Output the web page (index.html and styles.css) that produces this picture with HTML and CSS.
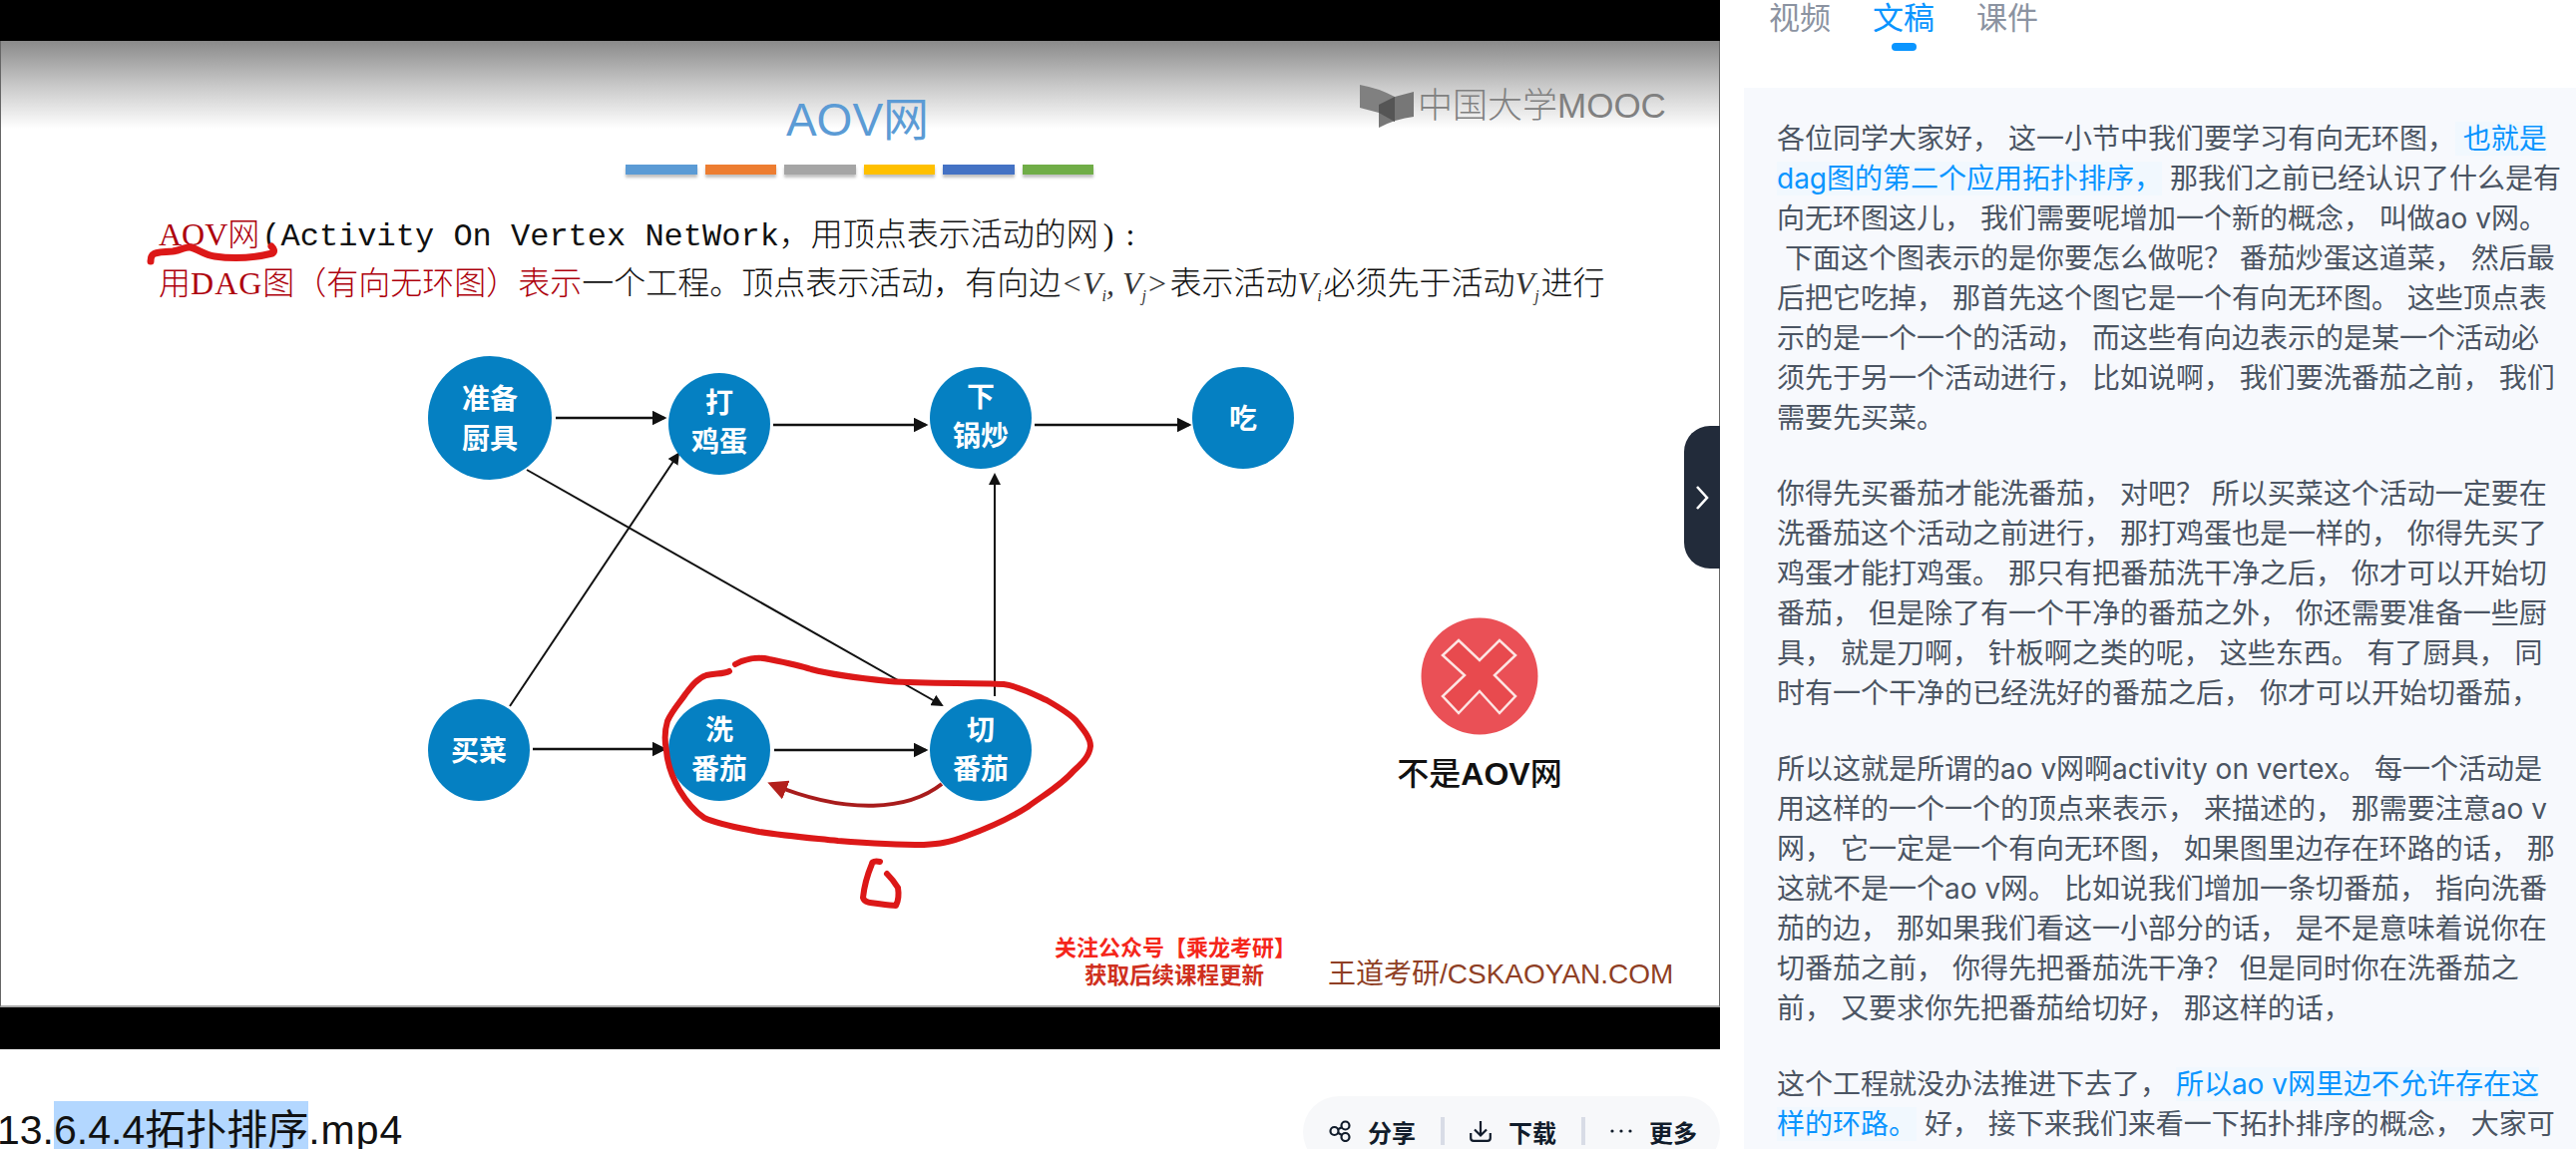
FILE: index.html
```html
<!DOCTYPE html>
<html lang="zh-CN">
<head>
    <meta charset="UTF-8">
    <title>13.6.4.4拓扑排序.mp4</title>
    <link rel="stylesheet" href="styles.css">
</head>
<body>
    <div id="page">
        <div id="left-column">
            <div id="player">
                <div id="slide">
                    <svg class="logo-mark" viewBox="0 0 58 44">
                        <path d="M2 1 Q20 4 37 13 L37 38 L21 29 L2 24 Z" fill="#808080"/>
                        <path d="M21 21 L37 13 L56 8 L56 33 Q38 35 21 44 Z" fill="#777"/>
                        <path d="M21 21 L37 13 L37 38 L21 29 Z" fill="#555"/>
                    </svg>
                    <div class="logo-text">中国大学MOOC</div>

                    <h2 class="slide-title">AOV网</h2>
                    <div class="title-bars">
                        <span class="bar bar-blue"></span>
                        <span class="bar bar-orange"></span>
                        <span class="bar bar-grey"></span>
                        <span class="bar bar-yellow"></span>
                        <span class="bar bar-navy"></span>
                        <span class="bar bar-green"></span>
                    </div>

                    <div class="slide-line"><span class="red">AOV网</span><span class="mono">(Activity On Vertex NetWork，</span>用顶点表示活动的网<span class="tail">) :</span></div>
                    <div class="slide-line"><span class="red">用<span class="dag">DAG</span>图（有向无环图）表示</span>一个工程。顶点表示活动，有向边<span class="math">&lt;V<sub>i</sub>, V<sub>j</sub>&gt;</span>表示活动<span class="math">V<sub>i</sub></span>必须先于活动<span class="math">V<sub>j</sub></span>进行</div>

                    <svg id="diagram" viewBox="0 41 1724 969">
                        <defs>
                            <marker id="tip" markerWidth="6" markerHeight="6" refX="5" refY="3" orient="auto">
                                <path d="M0 0 L6 3 L0 6 Z" fill="#111"/>
                            </marker>
                            <marker id="tip-red" markerWidth="5" markerHeight="5" refX="4" refY="2.5" orient="auto">
                                <path d="M0 0 L5 2.5 L0 5 Z" fill="#b3201c"/>
                            </marker>
                        </defs>

                        <g class="edge heavy">
                            <line x1="556" y1="419" x2="665" y2="419" marker-end="url(#tip)"/>
                            <line x1="774" y1="426" x2="927" y2="426" marker-end="url(#tip)"/>
                            <line x1="1036" y1="426" x2="1191" y2="426" marker-end="url(#tip)"/>
                            <line x1="533" y1="751" x2="665" y2="751" marker-end="url(#tip)"/>
                            <line x1="775" y1="752" x2="927" y2="752" marker-end="url(#tip)"/>
                        </g>
                        <g class="edge">
                            <line x1="996" y1="698" x2="996" y2="476" marker-end="url(#tip)"/>
                            <line x1="510" y1="708" x2="679" y2="455" marker-end="url(#tip)"/>
                            <line x1="527" y1="471" x2="943" y2="707" marker-end="url(#tip)"/>
                        </g>

                        <g class="node"><circle cx="490" cy="419" r="62"/><text x="490" y="410">准备</text><text x="490" y="450">厨具</text></g>
                        <g class="node"><circle cx="720" cy="425" r="51"/><text x="720" y="414">打</text><text x="720" y="453">鸡蛋</text></g>
                        <g class="node"><circle cx="982" cy="419" r="51"/><text x="982" y="408">下</text><text x="982" y="447">锅炒</text></g>
                        <g class="node"><circle cx="1245" cy="419" r="51"/><text x="1245" y="430">吃</text></g>
                        <g class="node"><circle cx="479" cy="752" r="51"/><text x="479" y="763">买菜</text></g>
                        <g class="node"><circle cx="720" cy="752" r="51"/><text x="720" y="742">洗</text><text x="720" y="781">番茄</text></g>
                        <g class="node"><circle cx="982" cy="752" r="51"/><text x="982" y="742">切</text><text x="982" y="781">番茄</text></g>

                        <path class="back-edge" d="M943 786 C910 812 850 818 772 786" marker-end="url(#tip-red)"/>

                        <circle class="no-badge" cx="1482" cy="678" r="58.5"/>
                        <polygon class="no-cross" points="1461,642 1482,662 1502,642 1518,657 1497,677 1518,698 1502,715 1482,693 1461,715 1445,698 1467,677 1445,657"/>
                        <text class="not-aov" x="1482" y="787">不是<tspan class="not-aov-latin">AOV</tspan>网</text>

                        <g class="ink">
                            <path class="ink-thick" d="M150 262 C150 254 152 253 172 252 C182 251 184 247 190 248 C198 250 204 256 214 257 C234 260 256 258 272 254 C275 252 273 249 271 247"/>
                            <path d="M736 666 C745 661 758 658 770 661 C785 664 800 667 812 671 C835 677 860 680 890 683 C930 686 975 684 1005 686 C1020 688 1035 696 1048 702 C1062 710 1072 716 1078 723 C1086 733 1092 740 1092 748 C1091 758 1084 765 1075 773 C1062 788 1045 797 1029 809 C1012 820 990 830 968 838 C950 845 940 846 925 847 C895 847 865 845 839 843 C810 840 785 838 760 834 C740 830 720 827 705 820 C693 812 686 802 680 792 C672 778 668 765 667 753 C665 743 665 733 668 723 C673 712 680 705 686 696 C692 688 698 680 707 677 C716 675 724 676 730 673"/>
                            <path d="M881 864 C876 863 873 864 873 866 C868 878 865 890 864 900 C865 904 868 904 871 905 C880 906 890 908 897 908 C900 902 900 896 899 890 C896 885 892 880 888 876"/>
                        </g>
                    </svg>

                    <div class="slide-footer">
                        <div class="notice">
                            <div class="notice-top">关注公众号【乘龙考研】</div>
                            <div class="notice-bottom">获取后续课程更新</div>
                        </div>
                        <div class="watermark">王道考研/CSKAOYAN.COM</div>
                    </div>
                </div>
            </div>

            <div id="title-row">
                <div class="file-name">13.<span class="selected">6.4.4拓扑排序</span><span class="ext">.mp4</span></div>
                <div class="actions">
                    <div class="action">
                        <svg class="action-icon" viewBox="0 0 22 22"><circle cx="5.5" cy="11" r="4"/><circle cx="16.5" cy="5.5" r="4"/><circle cx="16.5" cy="17" r="4"/><path d="M9 9.2 L13 7.2 M9 12.8 L13 15"/></svg>
                        <span>分享</span>
                    </div>
                    <div class="action">
                        <svg class="action-icon" viewBox="0 0 22 22"><path d="M11 1 V15.5 M5 9.5 L11 15.5 L17 9.5 M1.2 13 V18 Q1.2 20.8 4 20.8 H18 Q20.8 20.8 20.8 18 V13"/></svg>
                        <span>下载</span>
                    </div>
                    <div class="action">
                        <svg class="action-icon" viewBox="0 0 22 22"><circle class="dot" cx="2" cy="11" r="1.6"/><circle class="dot" cx="11" cy="11" r="1.6"/><circle class="dot" cx="20" cy="11" r="1.6"/></svg>
                        <span>更多</span>
                    </div>
                </div>
            </div>

            <div id="collapse-btn">
                <svg viewBox="0 0 14 26"><path d="M2 2 L12 13 L2 24"/></svg>
            </div>
        </div>

        <div id="right-column">
            <div id="tabs">
                <div class="tab">视频</div>
                <div class="tab active">文稿</div>
                <div class="tab">课件</div>
            </div>
            <div id="transcript">
                <p>各位同学大家好， 这一小节中我们要学习有向无环图，<span class="key"> 也就是dag图的第二个应用拓扑排序，</span> 那我们之前已经认识了什么是有向无环图这儿， 我们需要呢增加一个新的概念， 叫做ao v网。<br>&nbsp;下面这个图表示的是你要怎么做呢？ 番茄炒蛋这道菜， 然后最后把它吃掉， 那首先这个图它是一个有向无环图。 这些顶点表示的是一个一个的活动， 而这些有向边表示的是某一个活动必须先于另一个活动进行， 比如说啊， 我们要洗番茄之前， 我们需要先买菜。</p>
                <p>你得先买番茄才能洗番茄， 对吧？ 所以买菜这个活动一定要在洗番茄这个活动之前进行， 那打鸡蛋也是一样的， 你得先买了鸡蛋才能打鸡蛋。 那只有把番茄洗干净之后， 你才可以开始切番茄， 但是除了有一个干净的番茄之外， 你还需要准备一些厨具， 就是刀啊， 针板啊之类的呢， 这些东西。 有了厨具， 同时有一个干净的已经洗好的番茄之后， 你才可以开始切番茄，</p>
                <p>所以这就是所谓的ao v网啊activity on vertex。 每一个活动是用这样的一个一个的顶点来表示， 来描述的， 那需要注意ao v网， 它一定是一个有向无环图， 如果图里边存在环路的话， 那这就不是一个ao v网。 比如说我们增加一条切番茄， 指向洗番茄的边， 那如果我们看这一小部分的话， 是不是意味着说你在切番茄之前， 你得先把番茄洗干净？ 但是同时你在洗番茄之前， 又要求你先把番茄给切好， 那这样的话，</p>
                <p>这个工程就没办法推进下去了， <span class="key">所以ao v网里边不允许存在这样的环路。</span> 好， 接下来我们来看一下拓扑排序的概念， 大家可以看到这个地方</p>
            </div>
        </div>
    </div>
</body>
</html>
```

FILE: styles.css
```css
* {
    box-sizing: border-box;
}

html, body {
    margin: 0;
    padding: 0;
    height: 100%;
    overflow: hidden;
    background-color: #fff;
    font-family: "Liberation Sans", "Noto Sans CJK SC", sans-serif;
}

#page {
    display: flex;
    width: 2582px;
    height: 1152px;
    overflow: hidden;
}

#left-column {
    position: relative;
    width: 1724px;
    flex-shrink: 0;
}

#player {
    background-color: #000;
    height: 1052px;
    padding: 41px 0 42px;
}

#slide {
    position: relative;
    height: 969px;
    padding-top: 54px;
    display: flex;
    flex-direction: column;
    background: linear-gradient(#8a8a8a 0, #c9c9c9 45px, #fff 88px);
    border-left: 1px solid #666;
    border-right: 1px solid #666;
    border-bottom: 2px solid #aaa;
}

.logo-mark {
    position: absolute;
    left: 1360px;
    top: 43px;
    width: 58px;
    height: 44px;
}

.logo-text {
    position: absolute;
    left: 1420px;
    top: 42px;
    font-size: 35px;
    line-height: 46px;
    font-weight: 300;
    color: #808080;
    white-space: nowrap;
}

.slide-title {
    margin: 0;
    text-align: center;
    font-size: 46px;
    line-height: 50px;
    font-weight: 400;
    color: #5b9bd5;
    padding-right: 5px;
}

.title-bars {
    display: flex;
    gap: 8px;
    margin: 20px 0 0 626px;
}

.bar {
    width: 71.5px;
    height: 10px;
    box-shadow: 0 3px 3px rgba(0, 0, 0, 0.25);
}

.bar-blue { background-color: #5b9bd5; }
.bar-orange { background-color: #ed7d31; }
.bar-grey { background-color: #a5a5a5; }
.bar-yellow { background-color: #ffc000; }
.bar-navy { background-color: #4472c4; }
.bar-green { background-color: #70ad47; }

.slide-line {
    margin-left: 158px;
    font-size: 32px;
    line-height: 46px;
    font-weight: 300;
    color: #111;
    white-space: nowrap;
    font-family: "Liberation Serif", "Noto Sans CJK SC", serif;
}

.title-bars + .slide-line {
    margin-top: 37px;
}

.red {
    color: #ad000c;
}

.dag {
    letter-spacing: 1px;
}

.mono {
    font-family: "Liberation Mono", "Noto Sans CJK SC", monospace;
    font-size: 32px;
    margin-left: 2px;
}

.tail {
    margin-left: 5px;
    word-spacing: 4px;
}

.math {
    font-style: italic;
    color: #333;
    margin-right: 2px;
}

.math sub {
    font-size: 16px;
    line-height: 0;
}

#diagram {
    position: absolute;
    left: 0;
    top: 0;
    width: 1724px;
    height: 969px;
}

.edge line {
    stroke: #111;
    stroke-width: 2;
}

.edge.heavy line {
    stroke-width: 2.5;
}

.node circle {
    fill: #0580c2;
}

.node text {
    fill: #fff;
    font-size: 28px;
    font-weight: 700;
    text-anchor: middle;
    font-family: "Noto Sans CJK SC", sans-serif;
}

.back-edge {
    fill: none;
    stroke: #a81c1c;
    stroke-width: 4;
}

.no-badge {
    fill: #ea5056;
}

.no-cross {
    fill: #e84a4e;
    stroke: #fde4e2;
    stroke-width: 2.5;
}

.not-aov {
    font-size: 32px;
    font-weight: 500;
    text-anchor: middle;
    fill: #111;
    font-family: "Noto Sans CJK SC", sans-serif;
}

.not-aov-latin {
    font-weight: 700;
    font-family: "Liberation Sans", sans-serif;
}

.ink path {
    fill: none;
    stroke: #dc1818;
    stroke-width: 6;
    stroke-linecap: round;
    stroke-linejoin: round;
}

.ink .ink-thick {
    stroke-width: 7;
}

.slide-footer {
    display: flex;
    align-items: flex-end;
    margin-top: auto;
    padding: 0 45px 18px 1056px;
    position: relative;
}

.notice {
    width: 240px;
    text-align: center;
    font-weight: 700;
    font-size: 22.5px;
    line-height: 28px;
    white-space: nowrap;
    font-family: "Noto Sans CJK SC", sans-serif;
}

.notice-top {
    color: #f5261a;
    font-size: 22px;
}

.notice-bottom {
    color: #cf3020;
}

.watermark {
    margin-left: 34px;
    margin-bottom: -3px;
    font-size: 28px;
    line-height: 32px;
    color: #8f3f25;
    white-space: nowrap;
}

#title-row {
    display: flex;
    justify-content: space-between;
    align-items: flex-end;
    height: 100px;
    overflow: hidden;
}

.file-name {
    font-size: 41px;
    line-height: 52px;
    margin-left: -3px;
    margin-bottom: -7px;
    color: #111;
    white-space: nowrap;
}

.selected {
    padding-top: 6px;
    background-color: #b3d7ff;
}

.ext {
    letter-spacing: 1px;
}

.actions {
    display: flex;
    align-self: flex-start;
    margin-top: 47px;
    height: 72px;
    padding: 21px 0 0 26px;
    background-color: #f7f8fa;
    border-radius: 36px;
    width: 418px;
}

.action {
    display: flex;
    height: 28px;
    align-items: center;
    gap: 17px;
    font-size: 24px;
    font-weight: 700;
    color: #111c2b;
    white-space: nowrap;
    padding-right: 25px;
    margin-right: 25px;
    border-right: 4px solid #d8dce6;
    font-family: "Noto Sans CJK SC", sans-serif;
}

.action:last-child {
    border-right: none;
    padding-right: 0;
    margin-right: 0;
}

.action-icon {
    width: 22px;
    height: 22px;
    fill: none;
    stroke: #111c2b;
    stroke-width: 2.2;
}

.action-icon .dot {
    fill: #111c2b;
    stroke: none;
}

#collapse-btn {
    position: absolute;
    right: 0;
    top: 427px;
    width: 36px;
    height: 143px;
    display: flex;
    align-items: center;
    justify-content: center;
    background-color: #222b3a;
    border-radius: 26px 0 0 26px;
}

#collapse-btn svg {
    width: 14px;
    height: 26px;
    fill: none;
    stroke: #fff;
    stroke-width: 2.6;
}

#right-column {
    flex: 1;
    padding-left: 24px;
    min-width: 0;
}

#tabs {
    display: flex;
    gap: 42px;
    height: 88px;
    padding-left: 25px;
    margin-top: -7px;
}

.tab {
    position: relative;
    font-size: 31px;
    line-height: 46px;
    color: #8b93a1;
    font-family: "Noto Sans CJK SC", sans-serif;
}

.tab.active {
    color: #0a95ff;
}

.tab.active::after {
    content: "";
    position: absolute;
    left: 19px;
    top: 50px;
    width: 25px;
    height: 8px;
    border-radius: 4px;
    background-color: #0a95ff;
}

#transcript {
    height: 1070px;
    padding: 31px 0 0 33px;
    margin-top: 7px;
    background-color: #f7f9fd;
    overflow: hidden;
}

#transcript p {
    width: 786px;
    margin: 0 0 36px;
    font-size: 28px;
    line-height: 40px;
    color: #4b5563;
    font-family: Inter, "Noto Sans CJK SC", sans-serif;
}

.key {
    color: #0a95ff;
    background-color: #f1f8fe;
}
```
